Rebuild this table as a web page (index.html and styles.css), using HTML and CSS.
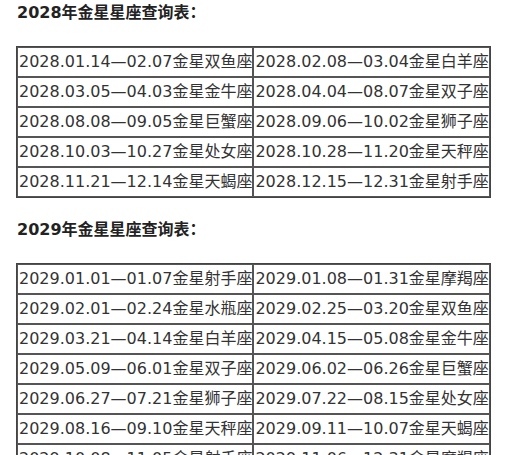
FILE: index.html
```html
<!DOCTYPE html>
<html lang="zh-CN">
<head>
<meta charset="utf-8">
<title>金星星座查询表</title>
<link rel="stylesheet" href="styles.css">
</head>
<body>
<div class="page">
  <p class="title">2028年金星星座查询表：</p>
  <table class="venus">
    <tr><td>2028.01.14—02.07金星双鱼座</td><td>2028.02.08—03.04金星白羊座</td></tr>
    <tr><td>2028.03.05—04.03金星金牛座</td><td>2028.04.04—08.07金星双子座</td></tr>
    <tr><td>2028.08.08—09.05金星巨蟹座</td><td>2028.09.06—10.02金星狮子座</td></tr>
    <tr><td>2028.10.03—10.27金星处女座</td><td>2028.10.28—11.20金星天秤座</td></tr>
    <tr><td>2028.11.21—12.14金星天蝎座</td><td>2028.12.15—12.31金星射手座</td></tr>
  </table>
  <p class="title">2029年金星星座查询表：</p>
  <table class="venus">
    <tr><td>2029.01.01—01.07金星射手座</td><td>2029.01.08—01.31金星摩羯座</td></tr>
    <tr><td>2029.02.01—02.24金星水瓶座</td><td>2029.02.25—03.20金星双鱼座</td></tr>
    <tr><td>2029.03.21—04.14金星白羊座</td><td>2029.04.15—05.08金星金牛座</td></tr>
    <tr><td>2029.05.09—06.01金星双子座</td><td>2029.06.02—06.26金星巨蟹座</td></tr>
    <tr><td>2029.06.27—07.21金星狮子座</td><td>2029.07.22—08.15金星处女座</td></tr>
    <tr><td>2029.08.16—09.10金星天秤座</td><td>2029.09.11—10.07金星天蝎座</td></tr>
    <tr><td>2029.10.08—11.05金星射手座</td><td>2029.11.06—12.31金星摩羯座</td></tr>
  </table>
</div>
</body>
</html>
```
FILE: styles.css
```css
html, body {
  margin: 0;
  padding: 0;
  background: #ffffff;
}
body {
  font-family: "DejaVu Sans", "Noto Sans CJK SC", sans-serif;
  font-size: 16px;
  color: #333333;
}
.page {
  padding: 0 16px;
}
.title {
  margin: 0 0 20px 1px;
  line-height: 26px;
  font-weight: bold;
  color: #222222;
}
.venus {
  border: 1px solid #444444;
  border-spacing: 0;
  margin-bottom: 19px;
}
.venus td {
  border: 1px solid #555555;
  padding: 0 0 0 1px;
  line-height: 28px;
  white-space: nowrap;
}
```
